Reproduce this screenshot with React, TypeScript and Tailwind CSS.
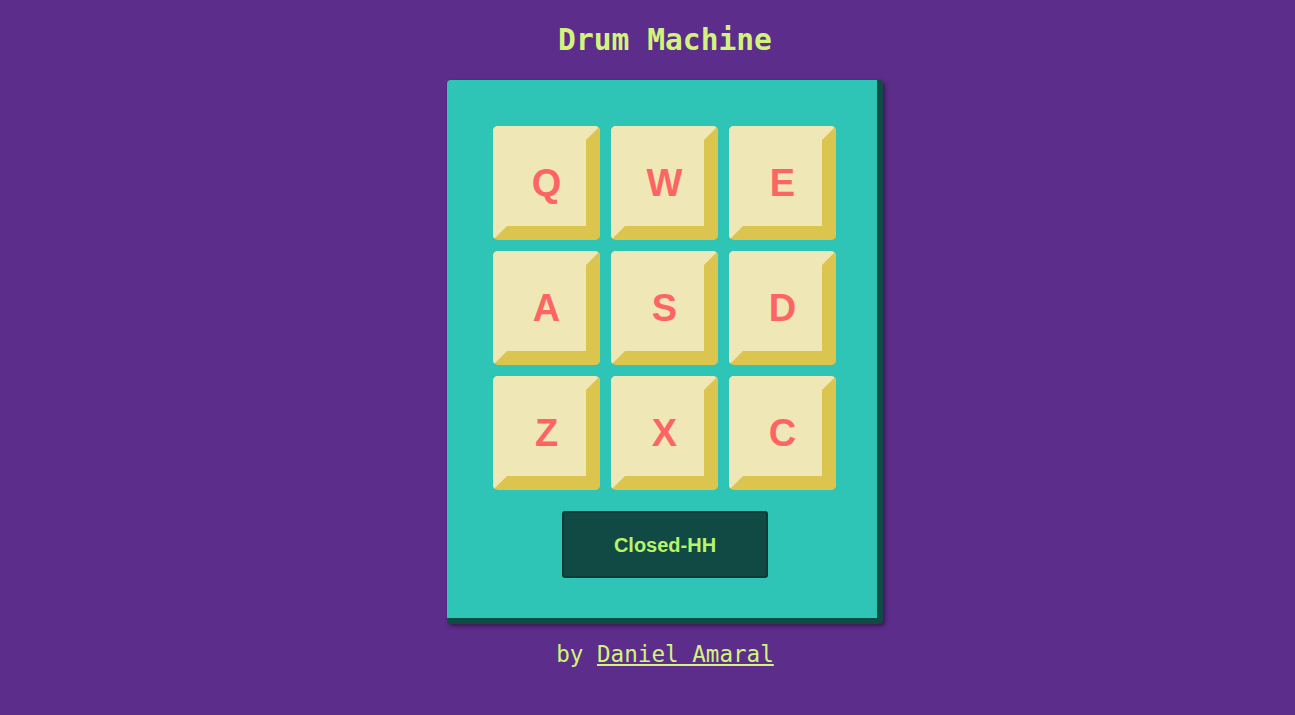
import React from "react";

const keys = ["Q", "W", "E", "A", "S", "D", "Z", "X", "C"];

export default function App() {
  return (
    <div className="min-h-[715px] w-full bg-[#5c2d8b] pl-[35px] flex flex-col items-center">
      <h1 className="mt-[22px] h-[36px] leading-[36px] text-[29.6px] font-bold text-[#d3f47c] font-['DejaVu_Sans_Mono',monospace]">
        Drum Machine
      </h1>
      <div className="mt-[22px] w-[436px] h-[544px] bg-[#2ec5b6] border-r-[6px] border-b-[6px] border-[#124a45] rounded-[4px] shadow-[2px_2px_4px_rgba(0,0,0,0.45)] pl-[46px] pt-[46px] flex flex-col">
        <div className="grid grid-cols-[107px_107px_107px] gap-[11px] w-[343px]">
          {keys.map((k) => (
            <div
              key={k}
              className="w-[107px] h-[114px] border-[14px] border-t-[#f0e7b7] border-l-[#f0e7b7] border-r-[#dcc54f] border-b-[#dcc54f] bg-[#f0e7b7] rounded-[5px] flex items-center justify-center text-[38px] font-bold text-[#fd6565] font-['Liberation_Sans',Arial,sans-serif]"
            >
              {k}
            </div>
          ))}
        </div>
        <div className="mt-[21px] ml-[69px] w-[206px] h-[67px] bg-[#114a44] border-2 border-[#0c3b36] rounded-[3px] flex items-center justify-center text-[20px] font-bold text-[#b8f46a] font-['Liberation_Sans',Arial,sans-serif]">
          Closed-HH
        </div>
      </div>
      <p className="mt-[16px] h-[28px] leading-[28px] text-[22.6px] text-[#d3f47c] font-['DejaVu_Sans_Mono',monospace]">
        by <a className="underline" href="#">Daniel Amaral</a>
      </p>
    </div>
  );
}
